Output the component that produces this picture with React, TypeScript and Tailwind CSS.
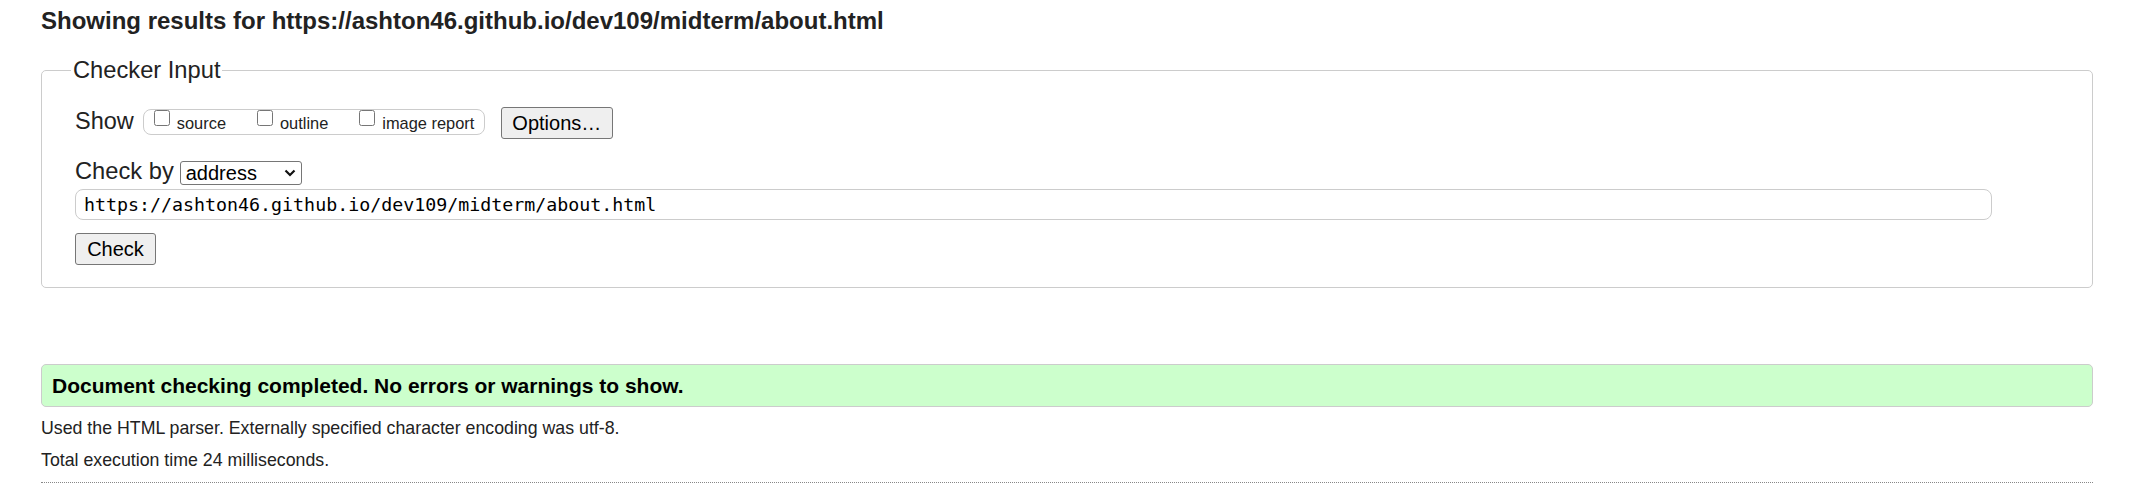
import React from "react";

const url = "https://ashton46.github.io/dev109/midterm/about.html";

function CheckOption({ label, first }: { label: string; first?: boolean }) {
  return (
    <label className={`flex items-start ${first ? "" : "ml-[31px]"}`}>
      <input type="checkbox" className="m-0 w-[16px] h-[16px]" />
      <span className="ml-[7px] mt-[4px] text-[16.4px] leading-[18px]">{label}</span>
    </label>
  );
}

export default function App() {
  return (
    <div className="w-[2131px] pl-[41px] pr-[38px] bg-white text-[#222] font-['Liberation_Sans',Arial,sans-serif]">
      <h2 className="pt-[7px] text-[24px] leading-[28px] font-bold">Showing results for {url}</h2>

      {/* Checker input form */}
      <fieldset className="mt-[22px] border border-[#cccccc] rounded-[5px] pl-[29px] pb-[22px]">
        <legend className="px-[2px] text-[23.7px] leading-[27px]">Checker Input</legend>

        <div className="pl-[4px]">
          <div className="mt-[23px] flex items-center h-[32px]">
            <span className="mb-[4px] text-[23.5px] leading-[26px]">Show</span>
            <div className="ml-[9px] mb-[2px] w-[342px] h-[26px] border border-[#cccccc] rounded-[8px] flex items-start pl-[10px]">
              <CheckOption label="source" first />
              <CheckOption label="outline" />
              <CheckOption label="image report" />
            </div>
            <button className="ml-[16px] w-[112px] h-[32px] border border-[#767676] rounded-[3px] bg-[#efefef] text-[20px] leading-[24px] text-black">
              Options…
            </button>
          </div>

          <div className="mt-[22px] flex items-center h-[24px]">
            <span className="mb-[4px] text-[23.7px] leading-[26px]">Check by</span>
            <div className="ml-[6px] w-[122px] h-[24px] border border-[#767676] rounded-[3px] flex items-center justify-between pl-[5px] pr-[5px] text-[20px] leading-[22px] text-black">
              <span>address</span>
              <svg width="12" height="8" viewBox="0 0 12 8">
                <path d="M1.5 1.5 L6 6 L10.5 1.5" fill="none" stroke="#111" strokeWidth="2.2" />
              </svg>
            </div>
          </div>

          <div className="mt-[4px] w-[1917px] h-[31px] border border-[#cccccc] rounded-[8px] pl-[8px] flex items-center font-['DejaVu_Sans_Mono',monospace] text-[18.3px] text-black">
            {url}
          </div>

          <button className="mt-[13px] w-[81px] h-[32px] border border-[#767676] rounded-[3px] bg-[#efefef] text-[20px] leading-[24px] text-black">
            Check
          </button>
        </div>
      </fieldset>

      {/* Result summary */}
      <div className="mt-[76px] border border-[#cccccc] rounded-[5px] bg-[#ccffcc] pl-[10px] py-[8px] text-[21px] leading-[25px] font-bold text-black">
        Document checking completed. No errors or warnings to show.
      </div>
      <p className="mt-[11px] text-[17.75px] leading-[20px]">
        Used the HTML parser. Externally specified character encoding was utf-8.
      </p>
      <p className="mt-[12px] text-[17.75px] leading-[20px]">Total execution time 24 milliseconds.</p>
      <hr className="mt-[12px] border-0 border-t border-dotted border-[#888]" />
    </div>
  );
}
